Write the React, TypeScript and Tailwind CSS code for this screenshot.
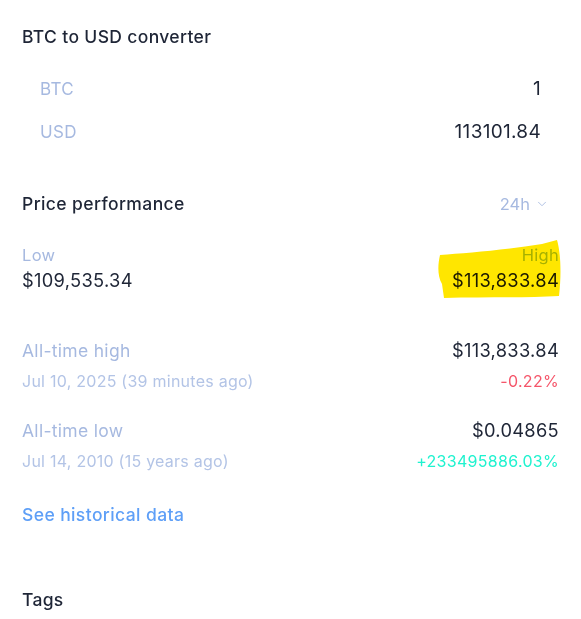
import { ChevronDown } from 'lucide-react';

function Row({ label, value }: { label: string; value: string }) {
  return (
    <div className="flex items-center justify-between h-[43px]">
      <span className="text-[17px] tracking-[0.3px] text-[#a6b9e0]">{label}</span>
      <span className="text-[19px] tracking-[0.3px] text-[#1e2536]">{value}</span>
    </div>
  );
}

function Stat({ label, date, value, change, changeColor }: { label: string; date: string; value: string; change: string; changeColor: string }) {
  return (
    <div className="flex flex-col">
      <div className="flex justify-between items-center h-[26px]">
        <span className="text-[17.5px] tracking-[0.3px] text-[#a6b9e0]">{label}</span>
        <span className="text-[18.3px] tracking-[0.3px] text-[#1e2536]">{value}</span>
      </div>
      <div className="mt-[4px] flex justify-between items-center h-[26px]">
        <span className="text-[16px] tracking-[0.25px] text-[#b3c4e6]">{date}</span>
        <span className={`text-[16px] tracking-[0.3px] ${changeColor}`}>{change}</span>
      </div>
    </div>
  );
}

export default function App() {
  return (
    <div className="min-h-screen bg-white px-[22px] text-[#1e2536]" style={{ fontFamily: 'Inter, "Noto Sans", sans-serif' }}>
      <div className="pt-[25px] text-[17.5px] tracking-[0.35px] font-medium leading-6">BTC to USD converter</div>

      <div className="mt-[19px] px-[18px]">
        <Row label="BTC" value="1" />
        <Row label="USD" value="113101.84" />
      </div>

      <div className="mt-[38px] flex items-center justify-between h-[24px]">
        <span className="text-[17.5px] tracking-[0.4px] font-medium">Price performance</span>
        <span className="flex items-center gap-[5px] pr-[10px] text-[16.5px] text-[#a6b9e0]">
          24h
          <ChevronDown size={14} strokeWidth={1.5} />
        </span>
      </div>

      <div className="mt-[26px] flex justify-between">
        <div className="flex flex-col">
          <span className="h-[26px] flex items-center text-[16.5px] tracking-[0.3px] text-[#a6b9e0]">Low</span>
          <span className="h-[26px] flex items-center text-[18.3px] tracking-[0.3px]">$109,535.34</span>
        </div>
        <div className="relative flex flex-col items-end">
          <span className="h-[26px] flex items-center text-[16.5px] tracking-[0.3px] text-[#a6c4e0]">High</span>
          <span className="h-[26px] flex items-center text-[18.3px] tracking-[0.3px] text-[#1a1a1a]">$113,833.84</span>
          <svg className="absolute -left-[16px] -top-[2px] w-[126px] h-[58px] mix-blend-multiply pointer-events-none" viewBox="0 0 126 58">
            <path d="M4 15 C 30 13, 70 10, 106 4 L 121 0 C 124 10, 126 30, 123 56 C 90 58, 50 57, 8 58 L 6 44 C 1 35, 2 24, 4 15 Z" fill="#ffe600" />
          </svg>
        </div>
      </div>

      <div className="mt-[44px] flex flex-col gap-[24px]">
        <Stat label="All-time high" date="Jul 10, 2025 (39 minutes ago)" value="$113,833.84" change="-0.22%" changeColor="text-[#f5566a]" />
        <Stat label="All-time low" date="Jul 14, 2010 (15 years ago)" value="$0.04865" change="+233495886.03%" changeColor="text-[#1ff2cf]" />
      </div>

      <div className="mt-[28px] h-[26px] flex items-center text-[17.5px] tracking-[0.4px] font-medium text-[#5e9ff7]">See historical data</div>

      <div className="mt-[59px] h-[26px] flex items-center text-[17.5px] tracking-[0.3px] font-medium">Tags</div>
    </div>
  );
}
